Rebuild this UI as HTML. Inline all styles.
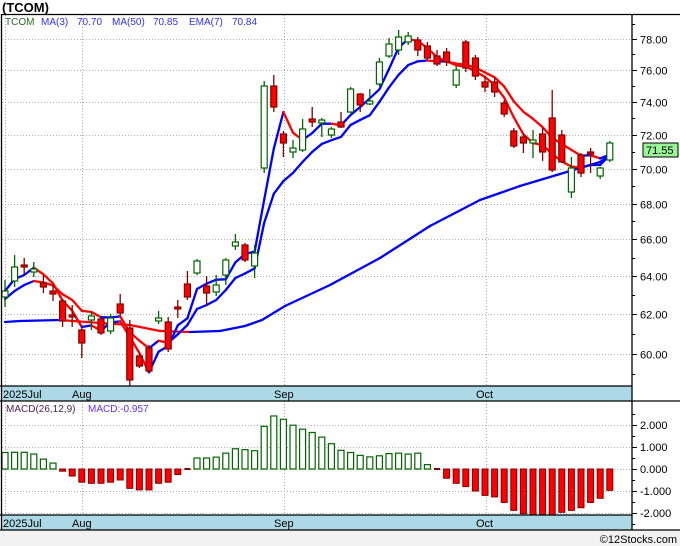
<!DOCTYPE html><html><head><style>
body{margin:0;width:680px;height:546px;overflow:hidden;background:#fff;font-family:"Liberation Sans",sans-serif}
svg{display:block}
</style></head><body>
<svg id="s" width="680" height="546" xmlns="http://www.w3.org/2000/svg" font-family="Liberation Sans, sans-serif">
<rect x="0" y="0" width="680" height="546" fill="#fff"/>
<rect x="0" y="530" width="680" height="16" fill="#f2f2f2"/>
<text x="2" y="12" font-size="13" font-weight="bold" fill="#000">(TCOM)</text>
<g id="grid" stroke="#aaa" stroke-width="1" stroke-dasharray="1,2"></g>
<g id="c"></g>
<rect x="2" y="386" width="630" height="15" fill="#add8e6"/>
<rect x="2" y="515" width="630" height="15" fill="#add8e6"/>
<g stroke="#000" stroke-width="1.3" fill="none">
<line x1="2" y1="14.5" x2="680" y2="14.5"/>
<line x1="0" y1="386" x2="632" y2="386"/>
<line x1="0" y1="401" x2="680" y2="401"/>
<line x1="0" y1="515" x2="632" y2="515"/>
<line x1="0" y1="530" x2="680" y2="530"/>
<line x1="1.5" y1="14" x2="1.5" y2="530"/>
<line x1="632" y1="14" x2="632" y2="530"/>
</g>
<g font-size="11" fill="#000">
<text x="3" y="398">2025Jul</text><text x="72" y="398">Aug</text><text x="274" y="398">Sep</text><text x="476" y="398">Oct</text>
<text x="3" y="527">2025Jul</text><text x="72" y="527">Aug</text><text x="274" y="527">Sep</text><text x="476" y="527">Oct</text>
</g>
<g font-size="10" fill="#3030ff">
<text x="5" y="25" fill="#2a6a2a">TCOM</text>
<text x="41" y="25">MA(3)</text><text x="77" y="25">70.70</text>
<text x="112" y="25">MA(50)</text><text x="153" y="25">70.85</text>
<text x="189" y="25">EMA(7)</text><text x="232" y="25">70.84</text>
</g>
<text x="6" y="412" font-size="10" fill="#502050">MACD(26,12,9)</text>
<text x="88" y="412" font-size="10" fill="#6030ff">MACD:-0.957</text>
<g id="ax" font-size="11" fill="#000"></g>
<rect x="643" y="143" width="35" height="14" fill="#98f598" stroke="#000" stroke-width="1"/>
<text x="646" y="154" font-size="11" fill="#000">71.55</text>
<text x="677" y="543" font-size="11" fill="#000" text-anchor="end">©12Stocks.com</text>
</svg>
<script>
var NS="http://www.w3.org/2000/svg";
function el(p,t,a){var e=document.createElementNS(NS,t);for(var k in a)e.setAttribute(k,a[k]);p.appendChild(e);return e;}
var g=document.getElementById('grid'),c=document.getElementById('c'),ax=document.getElementById('ax');
function Y(p){return 5267-1200*Math.log(p);}
for(var p=60;p<=78;p+=2){var y=Math.round(Y(p))+0.5;el(g,'line',{x1:2,y1:y,x2:632,y2:y});el(ax,'line',{x1:632,y1:y,x2:637,y2:y,stroke:'#000'});var t=el(ax,'text',{x:640,y:y+4});t.textContent=p.toFixed(2);}
for(var p=59;p<=79;p+=2){var y=Math.round(Y(p))+0.5;el(ax,'line',{x1:632,y1:y,x2:635,y2:y,stroke:'#000'});}
[5,82,284,486].forEach(function(x){el(g,'line',{x1:x+.5,y1:15,x2:x+.5,y2:386});el(g,'line',{x1:x+.5,y1:401,x2:x+.5,y2:515});});
[425,447,469,491,513].forEach(function(y,i){el(g,'line',{x1:2,y1:y+.5,x2:632,y2:y+.5});el(ax,'line',{x1:632,y1:y+.5,x2:637,y2:y+.5,stroke:'#000'});var t=el(ax,'text',{x:640,y:y+4});t.textContent=['2.000','1.000','0.000','-1.000','-2.000'][i];});
[414,436,458,480,502,524].forEach(function(y){el(ax,'line',{x1:632,y1:y+.5,x2:635,y2:y+.5,stroke:'#000'});});
var C=[[1,291,297,280,307],[1,267,281,255,287],[0,265,267,258,275],[1,269,272,262,277],[0,283,287,275,293],[0,291,294,285,301],[0,301,321,299,327],[0,315,317,305,327],[0,330,343,327,358],[1,316,320,312,330],[0,319,333,316,335],[1,318,331,314,334],[0,304,313,294,316],[0,328,380,320,387],[0,356,366,354,368],[0,348,371,345,372],[1,318,321,311,324],[0,322,349,317,352],[0,307,309,300,318],[0,284,297,271,300],[1,261,273,259,275],[0,286,293,276,305],[1,285,292,275,296],[1,260,275,258,285],[1,242,246,234,250],[0,245,260,243,262],[1,253,266,245,278],
[1,86,168,81,173],[0,86,107,75,112],[0,134,143,131,157],[1,148,152,140,158],[1,129,150,119,152],[0,119,122,107,127],[1,120,123,118,137],[1,129,135,127,138],[0,122,127,112,128],[1,89,112,87,113],[0,94,105,93,112],[1,101,104,89,105],[1,62,84,58,86],
[1,44,56,38,58],[1,37,50,30,55],[1,36,42,32,45],[0,40,50,37,56],[0,46,58,42,60],[0,56,64,50,66],[0,52,62,48,66],[1,70,85,66,88],[0,42,68,40,72],[0,58,76,55,80],[0,82,87,76,92],[0,82,92,78,97],[0,103,114,100,117],[0,131,146,128,148],[0,137,143,134,153],[1,140,143,130,158],[0,134,152,128,161],[0,118,170,90,172],[0,135,162,130,163],[1,168,192,157,198],[0,155,173,153,177],[0,152,154,148,173],[1,168,176,167,179],[1,143,160,141,162]];
function X(i){return 5+9.6*i;}
var cl=C.map(function(d){return d[0]?d[1]:d[2];});
function drawLine(pts){for(var i=1;i<pts.length;i++){var a=pts[i-1],b=pts[i];el(c,'line',{x1:a[0],y1:a[1],x2:b[0],y2:b[1],stroke:b[1]>a[1]+0.2?'#ff0000':'#0000ff','stroke-width':2.3,'stroke-linecap':'round'});}}
var m50=[[5,322],[20,321],[60,320],[100,323],[130,325],[160,331],[190,332],[220,331],[245,326],[262,320],[285,306],[330,285],[380,258],[430,226],[480,200],[520,186],[570,171],[600,162],[611,155]];
drawLine(m50);
var ema=[],e=cl[0]+8,k=2/8;for(var i=0;i<cl.length;i++){e=i==0?e:e+(cl[i]-e)*k;ema.push([X(i),e]);}
drawLine(ema);
var m3=[];for(var i=0;i<cl.length;i++){var a=cl.slice(Math.max(0,i-2),i+1);m3.push([X(i),a.reduce(function(s,v){return s+v;},0)/a.length]);}
drawLine(m3);
C.forEach(function(d,i){var x=X(i),col=d[0]?'#006400':'#800000';el(c,'line',{x1:x,y1:d[3],x2:x,y2:d[4],stroke:col,'stroke-width':1.3});el(c,'rect',{x:x-3,y:d[1],width:6,height:Math.max(1.5,d[2]-d[1]),fill:d[0]?'#fff':'#ff0000',stroke:col,'stroke-width':1.2});});
var H=[0.75,0.76,0.76,0.68,0.45,0.27,-0.1,-0.32,-0.6,-0.65,-0.65,-0.6,-0.5,-0.88,-0.95,-0.95,-0.65,-0.6,-0.25,-0.03,0.5,0.5,0.54,0.72,0.92,0.88,0.83,1.94,2.41,2.26,1.99,1.81,1.66,1.45,1.15,0.85,0.75,0.62,0.55,0.6,0.7,0.72,0.68,0.72,0.2,-0.05,-0.42,-0.65,-0.8,-1.0,-1.2,-1.27,-1.52,-1.88,-2.03,-2.08,-2.08,-2.1,-1.97,-1.88,-1.76,-1.52,-1.33,-0.97];
H.forEach(function(v,i){var x=X(i),y0=469,h=v*22;
 if(Math.abs(v)<0.07){el(c,'rect',{x:x-3,y:468,width:6,height:2,fill:v<0?'#800000':'#006400'});return;}
 if(v>0)el(c,'rect',{x:x-3,y:y0-h,width:6,height:h,fill:'#fff',stroke:'#006400','stroke-width':1.2});
 else el(c,'rect',{x:x-3,y:y0,width:6,height:-h,fill:'#ff0000',stroke:'#800000','stroke-width':1});});
</script>
</body></html>
